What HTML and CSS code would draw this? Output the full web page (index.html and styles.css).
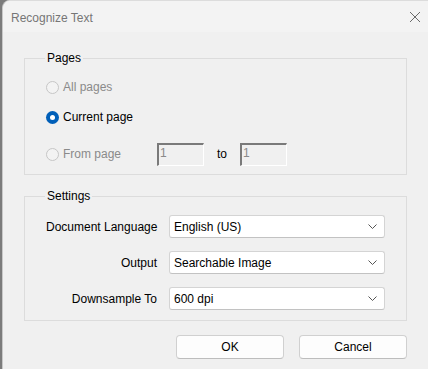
FILE: index.html
```html
<!DOCTYPE html>
<html>
<head>
<meta charset="utf-8">
<title>Recognize Text</title>
<link rel="stylesheet" href="styles.css">
</head>
<body>
<div class="window">
  <div class="titlebar">
    <span class="title">Recognize Text</span>
    <svg class="close" width="12" height="12" viewBox="0 0 12 12"><path d="M1 1 L11 11 M11 1 L1 11" stroke="#6a6a6a" stroke-width="1" fill="none"/></svg>
  </div>
  <div class="content">
    <fieldset class="group pages">
      <legend>Pages</legend>
      <div class="row r1"><span class="radio disabled"></span><span class="rlabel disabled-text">All pages</span></div>
      <div class="row r2"><span class="radio checked"></span><span class="rlabel">Current page</span></div>
      <div class="row r3">
        <span class="radio disabled"></span><span class="rlabel disabled-text from">From page</span>
        <span class="num">1</span><span class="to">to</span><span class="num">1</span>
      </div>
    </fieldset>
    <fieldset class="group settings">
      <legend>Settings</legend>
      <div class="form">
        <span class="label">Document Language</span>
        <div class="combo"><span>English (US)</span><svg width="9" height="5" viewBox="0 0 9 5"><path d="M0.5 0.5 L4.5 4.5 L8.5 0.5" stroke="#555" fill="none"/></svg></div>
        <span class="label">Output</span>
        <div class="combo"><span>Searchable Image</span><svg width="9" height="5" viewBox="0 0 9 5"><path d="M0.5 0.5 L4.5 4.5 L8.5 0.5" stroke="#555" fill="none"/></svg></div>
        <span class="label">Downsample To</span>
        <div class="combo"><span>600 dpi</span><svg width="9" height="5" viewBox="0 0 9 5"><path d="M0.5 0.5 L4.5 4.5 L8.5 0.5" stroke="#555" fill="none"/></svg></div>
      </div>
    </fieldset>
    <div class="buttons">
      <button class="btn">OK</button>
      <button class="btn">Cancel</button>
    </div>
  </div>
</div>
</body>
</html>
```
FILE: styles.css
```css
html, body {
  margin: 0;
  padding: 0;
  height: 369px;
  overflow: hidden;
}
body {
  background: #7c7c7c;
  font-family: "Liberation Sans", Arial, sans-serif;
  font-size: 12px;
  color: #000;
}
.window {
  margin-left: 2px;
  height: 369px;
  background: #f0f0f0;
  border-top-left-radius: 8px;
  border-top: 1px solid #dcdcdc;
  border-left: 1px solid #c8c8c8;
  box-sizing: border-box;
  overflow: hidden;
}
.titlebar {
  height: 31px;
  background: #f3f3f3;
  display: flex;
  align-items: center;
  justify-content: space-between;
  padding: 0 7px 0 8px;
}
.title {
  color: #767676;
  font-size: 12px;
  padding-top: 2px;
}
.close {
  margin-top: 1px;
}
.content {
  padding: 19px 21px 0 21px;
}
.group {
  margin: 0;
  border: 1px solid #dcdcdc;
  padding: 0 21px;
  min-width: 0;
}
.group legend {
  padding: 0 2px;
  margin-left: -1px;
  line-height: 15px;
  font-size: 12px;
}
.pages {
  padding-top: 10px;
  padding-bottom: 8px;
}
.row {
  display: flex;
  align-items: center;
  height: 22px;
}
.r2 { margin-top: 8px; }
.r3 { margin-top: 14px; height: 24px; }
.radio {
  width: 13px;
  height: 13px;
  border-radius: 50%;
  box-sizing: border-box;
  flex: none;
}
.radio.disabled {
  border: 1px solid #c6c6c6;
  background: #f3f3f3;
}
.radio.checked {
  background: #005fb8;
  position: relative;
}
.radio.checked::after {
  content: "";
  position: absolute;
  left: 4px;
  top: 4px;
  width: 5px;
  height: 5px;
  border-radius: 50%;
  background: #fff;
}
.rlabel {
  margin-left: 4px;
}
.disabled-text {
  color: #8a8a8a;
}
.from {
  width: 94px;
}
.num {
  width: 47px;
  height: 23px;
  box-sizing: border-box;
  border-top: 2px solid #7a7a7a;
  border-left: 2px solid #7a7a7a;
  border-right: 1px solid #ffffff;
  border-bottom: 1px solid #ffffff;
  color: #8a8a8a;
  padding: 1px 0 0 1px;
  line-height: 14px;
  align-self: center;
}
.to {
  margin: 0 13px 0 13px;
}
.settings {
  margin-top: 14px;
  padding-top: 11px;
  padding-bottom: 10px;
}
.form {
  display: grid;
  grid-template-columns: 111px 216px;
  column-gap: 12px;
  row-gap: 13px;
  align-items: center;
}
.label {
  text-align: right;
  white-space: nowrap;
}
.combo {
  height: 23px;
  box-sizing: border-box;
  background: #fff;
  border: 1px solid #d4d4d4;
  border-bottom-color: #c2c2c2;
  border-radius: 3px;
  display: flex;
  align-items: center;
  justify-content: space-between;
  padding: 0 7px 0 4px;
}
.buttons {
  display: flex;
  justify-content: flex-end;
  gap: 15px;
  margin-top: 14px;
}
.btn {
  width: 108px;
  height: 24px;
  background: #fdfdfd;
  border: 1px solid #d0d0d0;
  border-bottom-color: #bdbdbd;
  border-radius: 4px;
  font-family: "Liberation Sans", Arial, sans-serif;
  font-size: 12px;
  color: #000;
  padding: 0;
}
```
